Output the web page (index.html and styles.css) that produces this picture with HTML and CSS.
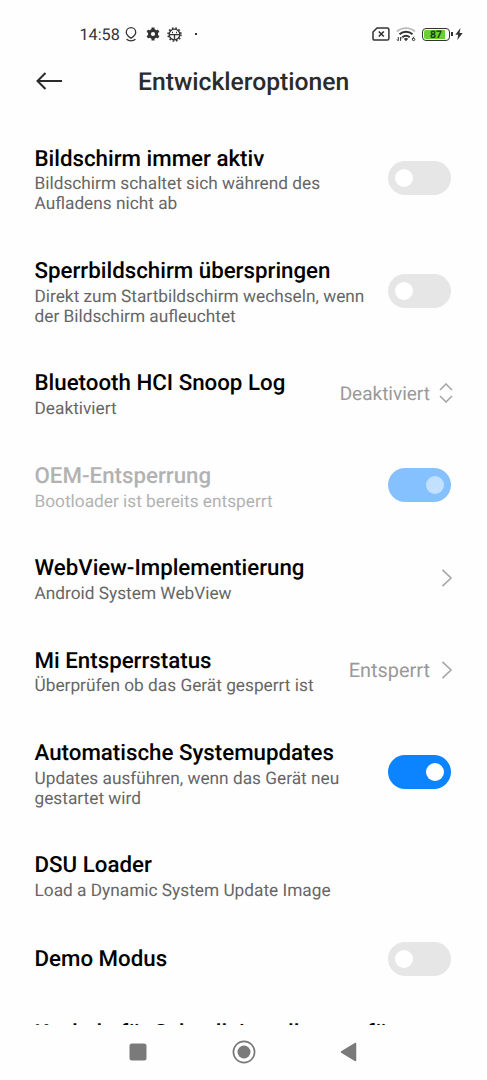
FILE: index.html
```html
<!DOCTYPE html>
<html lang="de">
<head>
	<meta charset="UTF-8">
	<title>Entwickleroptionen</title>
	<link rel="stylesheet" href="styles.css">
</head>
<body>
	<div class="statusbar">
		<span class="time">14:58</span>
		<svg class="ico-pin" width="12" height="15" viewBox="0 0 12 15"><path d="M6 11.3C4 9.9 1.3 8 1.3 5.4a4.7 4.7 0 0 1 9.4 0C10.7 8 8 9.9 6 11.3zM1.5 12.3c2.5 2 6.500 2 9 0" fill="none" stroke="#333" stroke-width="1.3"/></svg>
		<svg class="ico-gear" width="14" height="14" viewBox="0 0 14 14"><circle cx="7" cy="7" r="3.600" fill="none" stroke="#333" stroke-width="3"/><path d="M7 .4v3M7 10.600v3M1.300 3.700l2.600 1.500M10.100 8.800l2.600 1.500M1.300 10.300l2.600-1.500M10.100 5.200l2.600-1.500" stroke="#333" stroke-width="3"/></svg>
		<svg class="ico-cog" width="15" height="15" viewBox="0 0 15 15"><circle cx="7.500" cy="7.500" r="5.300" fill="none" stroke="#333" stroke-width="1.300"/><circle cx="7.500" cy="7.500" r="6.500" fill="none" stroke="#333" stroke-width="1.500" stroke-dasharray="1.700 1.700"/><path d="M2.500 7.600h10M7.500 7.600v5M5 5.500h1M9 5.500h1" stroke="#333" stroke-width="1.300"/></svg>
		<i class="dot"></i>
		<svg class="ico-sim" width="18" height="14" viewBox="0 0 18 14"><path d="M5 .9h10.200q1.700 0 1.700 1.700v8.800q0 1.700-1.700 1.700H2.700Q1 13.100 1 11.400V5z" fill="none" stroke="#333" stroke-width="1.500"/><path d="M6.800 4.500l5 5M11.800 4.500l-5 5" stroke="#333" stroke-width="1.700"/></svg>
		<svg class="ico-wifi" width="20" height="16" viewBox="0 0 20 16"><g fill="none"><path d="M1 5.500a13.500 13.500 0 0 1 18 0" stroke="#bbb" stroke-width="1.800"/><path d="M3.500 8.300a9.800 9.800 0 0 1 13 0M6.300 11.200a5.800 5.800 0 0 1 7.400 0" stroke="#333" stroke-width="2"/></g><path d="M7.800 12.700q2.200-1.500 4.400 0L10 15.300z" fill="#333"/><path d="M2.300 11v3.700M1 13.500l1.300 1.400M4.600 14.900v-3.700M4.600 11.100l1.300 1.400M18.300 10.800q-1.900.6-1.900 2.600" stroke="#333" fill="none"/><circle cx="17.600" cy="13.400" r="1.200" fill="none" stroke="#333"/></svg>
		<span class="battery"><b>87</b></span>
		<svg class="ico-bolt" width="8" height="12" viewBox="0 0 8 12"><path d="M5.500 0L.3 6.800h2.900L2.300 12l5.400-7H4.600z" fill="#333"/></svg>
	</div>
	<div class="header">
		<svg class="back" width="27" height="18" viewBox="0 0 27 18"><path d="M9.500 1L1.500 9l8 8M1.500 9H26" fill="none" stroke="#2b2b2b" stroke-width="2"/></svg>
		<h1>Entwickleroptionen</h1>
	</div>
	<ul class="list">
		<li>
			<div class="text"><h2>Bildschirm immer aktiv</h2><p>Bildschirm schaltet sich während des<br>Aufladens nicht ab</p></div>
			<span class="switch"></span>
		</li>
		<li>
			<div class="text"><h2>Sperrbildschirm überspringen</h2><p>Direkt zum Startbildschirm wechseln, wenn<br>der Bildschirm aufleuchtet</p></div>
			<span class="switch"></span>
		</li>
		<li>
			<div class="text"><h2>Bluetooth HCI Snoop Log</h2><p>Deaktiviert</p></div>
			<span class="value select">Deaktiviert</span>
			<svg class="arrow" width="14" height="20" viewBox="0 0 14 20"><path d="M1 7l6-6 6 6M1 13l6 6 6-6" fill="none" stroke="#a6a6a6" stroke-width="1.600"/></svg>
		</li>
		<li class="disabled">
			<div class="text"><h2>OEM-Entsperrung</h2><p>Bootloader ist bereits entsperrt</p></div>
			<span class="switch on"></span>
		</li>
		<li>
			<div class="text"><h2>WebView-Implementierung</h2><p>Android System WebView</p></div>
			<svg class="arrow next" width="12" height="18" viewBox="0 0 12 18"><path d="M1.500.8L10 9l-8.500 8.200" fill="none" stroke="#a6a6a6" stroke-width="1.600"/></svg>
		</li>
		<li>
			<div class="text"><h2>Mi Entsperrstatus</h2><p>Überprüfen ob das Gerät gesperrt ist</p></div>
			<span class="value">Entsperrt</span>
			<svg class="arrow next" width="12" height="18" viewBox="0 0 12 18"><path d="M1.500.8L10 9l-8.500 8.200" fill="none" stroke="#a6a6a6" stroke-width="1.600"/></svg>
		</li>
		<li>
			<div class="text"><h2>Automatische Systemupdates</h2><p>Updates ausführen, wenn das Gerät neu<br>gestartet wird</p></div>
			<span class="switch on"></span>
		</li>
		<li>
			<div class="text"><h2>DSU Loader</h2><p>Load a Dynamic System Update Image</p></div>
		</li>
		<li class="single">
			<div class="text"><h2>Demo Modus</h2></div>
			<span class="switch"></span>
		</li>
		<li>
			<div class="text"><h2>Kacheln für Schnelleinstellungen für</h2></div>
		</li>
	</ul>
	<div class="navbar">
		<svg width="18" height="18" viewBox="0 0 18 18"><rect x=".5" y=".5" width="17" height="17" rx="2.500" fill="#7a7a7a"/></svg>
		<svg width="24" height="24" viewBox="0 0 24 24"><circle cx="12" cy="12" r="10.600" fill="none" stroke="#7a7a7a" stroke-width="1.700"/><circle cx="12" cy="12" r="6.500" fill="#7a7a7a"/></svg>
		<svg width="17" height="20" viewBox="0 0 17 20"><path d="M15.500 1.500v17L1.500 10z" fill="#7a7a7a" stroke="#7a7a7a" stroke-width="1.500" stroke-linejoin="round"/></svg>
	</div>
</body>
</html>
```
FILE: styles.css
```css
body,h1,h2,ul,li,p{margin: 0;padding: 0;}
body{width: 487px;height: 1080px;overflow: hidden;display: flex;flex-direction: column;background: #fefefe;font-family: Roboto,sans-serif;color: #000;text-rendering: geometricPrecision;}
ul{list-style: none;}
svg{display: block;flex: none;}

.statusbar{height: 60px;padding: 8px 24px 0 79.500px;box-sizing: border-box;display: flex;align-items: center;color: #333;}
.time{width: 45.500px;font-size: 16.200px;}
.ico-gear{margin-left: 8.500px;}
.ico-cog{margin-left: 7px;}
.dot{width: 2px;height: 2px;margin-left: 13px;background: #333;}
.ico-sim{margin-left: auto;}
.ico-wifi{margin-left: 6px;}
.battery{position: relative;width: 28px;height: 13px;margin: 0 5px 0 6px;box-sizing: border-box;border: 1.5px solid #333;border-radius: 4px;background: linear-gradient(90deg,#67d12f 87%,#fff 87%) content-box;padding: 1px;text-align: center;}
.battery:after{content: "";position: absolute;right: -4px;top: 3px;width: 2px;height: 4px;background: #333;}
.battery b{display: block;font-size: 10.500px;line-height: 10px;color: #1c3a10;}

.header{height: 62px;display: flex;padding: 8px 0 0 36px;box-sizing: border-box;}
.back{margin-top: 4px;}
.header h1{margin: -2px 0 0 75px;font-size: 24.700px;line-height: 34px;font-weight: 500;color: #2b2b2b;}

.list{height: 902.500px;overflow: hidden;}
.list li{display: flex;align-items: center;padding: 19.900px 36px 19.900px 34.500px;}
.text{flex: 1;padding-top: 1.800px;white-space: nowrap;}
.text h2{font-size: 22.300px;line-height: 30.400px;font-weight: 500;}
.text p{padding-top: .400px;font-size: 17.270px;line-height: 20px;color: #666;}
.list .single{padding-top: 20.700px;padding-bottom: 20.700px;}
.value{padding-top: 1.400px;font-size: 19.900px;color: #999;}
.select{font-size: 19px;}
.arrow{margin: 0 -2px 0 9px;}
.next{margin-left: 11px;}

.switch{width: 63px;height: 34px;border-radius: 17px;box-sizing: border-box;padding: 8px 7px;display: flex;background: #e6e6e6;}
.switch:before{content: "";width: 18px;height: 18px;border-radius: 50%;background: #fff;}
.switch.on{justify-content: flex-end;background: #0d84ff;}
.disabled h2,.disabled p{color: #b2b2b2;}
.disabled .switch{background: #86c1ff;}
.disabled .switch:before{background: #c2e0ff;}

.navbar{flex: 1;display: flex;align-items: center;padding: 0 130px 1px 129px;justify-content: space-between;}
```
